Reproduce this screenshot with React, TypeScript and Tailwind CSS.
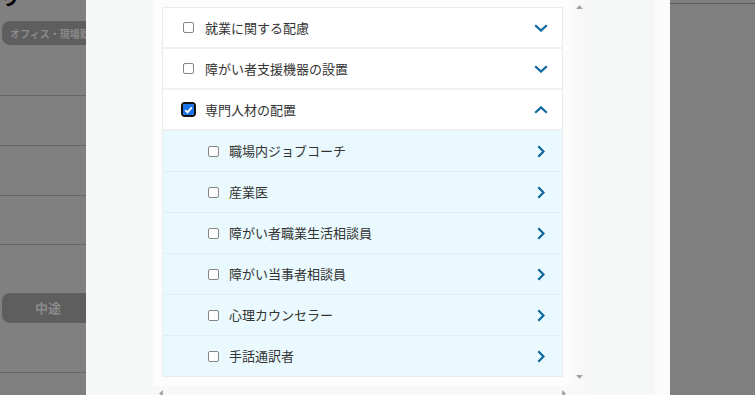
import React from 'react';

const font = { fontFamily: '"Noto Sans CJK JP", "Noto Sans", sans-serif' };

type Item = { label: string; checked?: boolean; open?: boolean };

const topItems: Item[] = [
  { label: '就業に関する配慮' },
  { label: '障がい者支援機器の設置' },
  { label: '専門人材の配置', checked: true, open: true },
];

const subItems = ['職場内ジョブコーチ', '産業医', '障がい者職業生活相談員', '障がい当事者相談員', '心理カウンセラー', '手話通訳者'];

const Box: React.FC<{ checked?: boolean }> = ({ checked }) =>
  checked ? (
    <span className="w-[15px] h-[15px] rounded-[4px] border-2 border-[#101010] flex items-center justify-center shrink-0">
      <span className="w-[11px] h-[11px] rounded-[2px] bg-[#1a73e8] flex items-center justify-center">
        <svg width="9" height="8" viewBox="0 0 9 8">
          <polyline points="1.2,4.2 3.5,6.4 7.8,1.4" fill="none" stroke="#fff" strokeWidth="1.8" />
        </svg>
      </span>
    </span>
  ) : (
    <span className="w-[11px] h-[11px] rounded-[2px] border border-[#858585] bg-white shrink-0" />
  );

const ChevronDown = () => (
  <svg width="14" height="8" viewBox="0 0 14 8">
    <polyline points="1.2,1.2 7,6.6 12.8,1.2" fill="none" stroke="#0b679e" strokeWidth="2.2" />
  </svg>
);
const ChevronUp = () => (
  <svg width="14" height="8" viewBox="0 0 14 8">
    <polyline points="1.2,6.8 7,1.4 12.8,6.8" fill="none" stroke="#0b679e" strokeWidth="2.2" />
  </svg>
);
const ChevronRight = () => (
  <svg width="8" height="13" viewBox="0 0 8 13">
    <polyline points="1.3,1.2 6.5,6.5 1.3,11.8" fill="none" stroke="#0b679e" strokeWidth="2.2" />
  </svg>
);

const Tri = ({ dir }: { dir: 'up' | 'down' | 'left' | 'right' }) => {
  const pts = {
    up: '0,4 3.5,0 7,4',
    down: '0,0 3.5,4 7,0',
    left: '4,0 0,3.5 4,7',
    right: '0,0 4,3.5 0,7',
  }[dir];
  const vert = dir === 'up' || dir === 'down';
  return (
    <svg width={vert ? 7 : 4} height={vert ? 4 : 7} viewBox={vert ? '0 0 7 4' : '0 0 4 7'}>
      <polygon points={pts} fill="#a3a3a3" />
    </svg>
  );
};

export default function App() {
  return (
    <div className="w-[755px] h-[395px] overflow-hidden flex bg-[#808080]" style={font}>
      {/* page behind the overlay */}
      <div className="w-[86px] shrink-0 overflow-hidden flex flex-col">
        <div className="h-[8px] overflow-hidden relative">
          <span className="block -mt-[14px] text-[20px] leading-[22px] text-black font-bold">り</span>
        </div>
        <div className="mt-[13px] ml-[2px] w-[130px] h-[24px] rounded-[8px] bg-[#5e5e5e] flex items-center pl-[8px]">
          <span className="text-[10px] font-bold text-[#8b8b8b] whitespace-nowrap">オフィス・現場勤務</span>
        </div>
        <div className="mt-[50px] h-px bg-[#666]" />
        <div className="mt-[49px] h-px bg-[#666]" />
        <div className="mt-[49px] h-px bg-[#666]" />
        <div className="mt-[48px] h-px bg-[#666]" />
        <div className="mt-[48px] ml-[2px] w-[92px] h-[30px] rounded-[8px] bg-[#5e5e5e] flex items-center justify-center">
          <span className="text-[13px] font-bold text-[#8b8b8b]">中途</span>
        </div>
        <div className="mt-[49px] h-px bg-[#666]" />
      </div>

      {/* modal */}
      <div className="w-[584px] shrink-0 h-full bg-[#f6f8f8] flex overflow-hidden">
        <div className="w-[67px] shrink-0" />
        <div className="w-[434px] shrink-0 flex flex-col h-[401px]">
          <div className="flex h-[386px]">
            <div className="w-[419px] bg-[#fcfcfc] pt-[7px] px-[9px] overflow-hidden">
              <div className="border-x border-t border-[#ececec] bg-white">
                {topItems.map(item => (
                  <div key={item.label} className="h-[41px] border-b-2 border-[#f0f0f0] flex items-center pl-[20px] pr-[14px]">
                    <div className={item.checked ? '-ml-[2px] mr-[9px] flex' : 'mr-[11px] flex'}>
                      <Box checked={item.checked} />
                    </div>
                    <span className="text-[13px] text-[#333] flex-1">{item.label}</span>
                    {item.open ? <ChevronUp /> : <ChevronDown />}
                  </div>
                ))}
                {subItems.map(label => (
                  <div key={label} className="h-[41px] border-b border-[#e4eef0] bg-[#e9f9fd] flex items-center pl-[45px] pr-[17px]">
                    <div className="mr-[10px] flex">
                      <Box />
                    </div>
                    <span className="text-[13px] text-[#333] flex-1">{label}</span>
                    <ChevronRight />
                  </div>
                ))}
              </div>
            </div>
            <div className="w-[15px] bg-[#f8f8f8] flex flex-col items-center justify-between pt-[5px] pb-[7px]">
              <Tri dir="up" />
              <Tri dir="down" />
            </div>
          </div>
          <div className="flex h-[15px]">
            <div className="w-[419px] bg-[#f8f8f8] flex items-center justify-between pl-[6px] pr-[6px]">
              <Tri dir="left" />
              <Tri dir="right" />
            </div>
            <div className="w-[15px] bg-[#f8f8f8]" />
          </div>
        </div>
        <div className="w-[68px] shrink-0" />
        <div className="w-[15px] shrink-0 bg-[#fbfbfb]" />
      </div>

      {/* page behind, right side */}
      <div className="flex-1 flex flex-col">
        <div className="mt-[3px] h-px bg-[#5a5a5a]" />
      </div>
    </div>
  );
}
